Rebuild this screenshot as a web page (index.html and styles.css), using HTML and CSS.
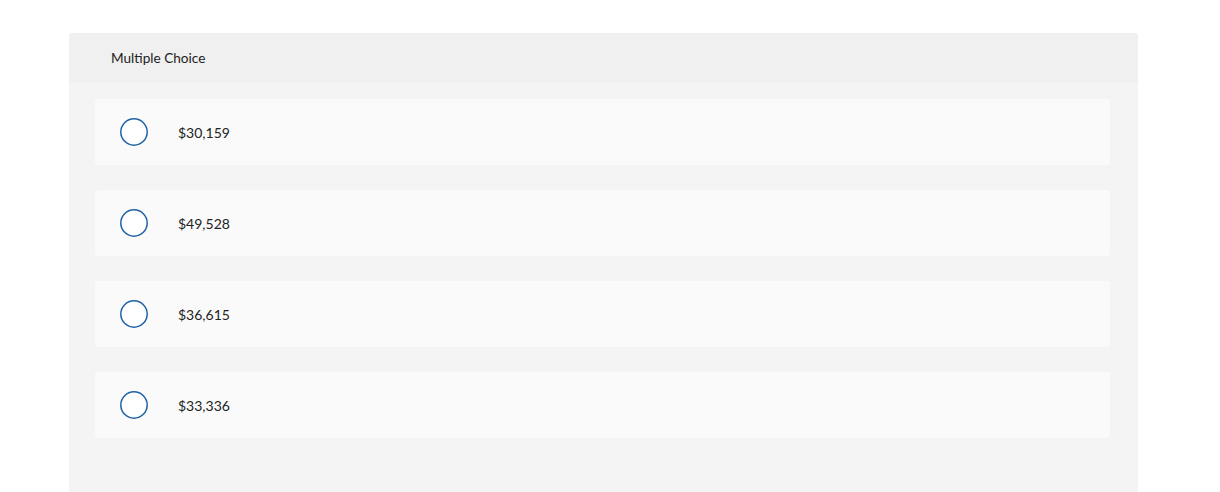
FILE: index.html
```html
<!DOCTYPE html>
<html>
<head>
  <title>Multiple Choice</title>
  <link rel="stylesheet" href="styles.css">
</head>
<body>
  <div class="question">
    <div class="question-header">Multiple Choice</div>
    <div class="choices">
      <label class="choice">
        <svg class="radio" width="28" height="28" viewBox="0 0 28 28"><circle cx="14" cy="14" r="13.2"/></svg>
        <span class="choice-text">$30,159</span>
      </label>
      <label class="choice">
        <svg class="radio" width="28" height="28" viewBox="0 0 28 28"><circle cx="14" cy="14" r="13.2"/></svg>
        <span class="choice-text">$49,528</span>
      </label>
      <label class="choice">
        <svg class="radio" width="28" height="28" viewBox="0 0 28 28"><circle cx="14" cy="14" r="13.2"/></svg>
        <span class="choice-text">$36,615</span>
      </label>
      <label class="choice">
        <svg class="radio" width="28" height="28" viewBox="0 0 28 28"><circle cx="14" cy="14" r="13.2"/></svg>
        <span class="choice-text">$33,336</span>
      </label>
    </div>
  </div>
</body>
</html>
```

FILE: styles.css
```css
body {
  font-family: Lato, "Liberation Sans", sans-serif;
  background-color: white;
  margin: 0;
  padding: 33px 82px 0 69px;
  color: #222;
}

.question {
  background-color: #f4f4f4;
  border-radius: 3px 3px 0 0;
  min-height: 480px;
}

.question-header {
  background-color: #f0f0f0;
  border-radius: 3px 3px 0 0;
  height: 50px;
  padding-left: 42px;
  display: flex;
  align-items: center;
  font-size: 13.6px;
}

.choices {
  display: flex;
  flex-direction: column;
  gap: 25px;
  padding: 16px 28px 0 26px;
}

.choice {
  background-color: #fafafa;
  border-radius: 3px;
  height: 66px;
  display: flex;
  align-items: center;
  padding-left: 25px;
  cursor: pointer;
}

.radio {
  flex-shrink: 0;
  fill: white;
  stroke: #1f62a5;
  stroke-width: 1.5;
}

.choice-text {
  margin-left: 30px;
  font-size: 14px;
}
```
